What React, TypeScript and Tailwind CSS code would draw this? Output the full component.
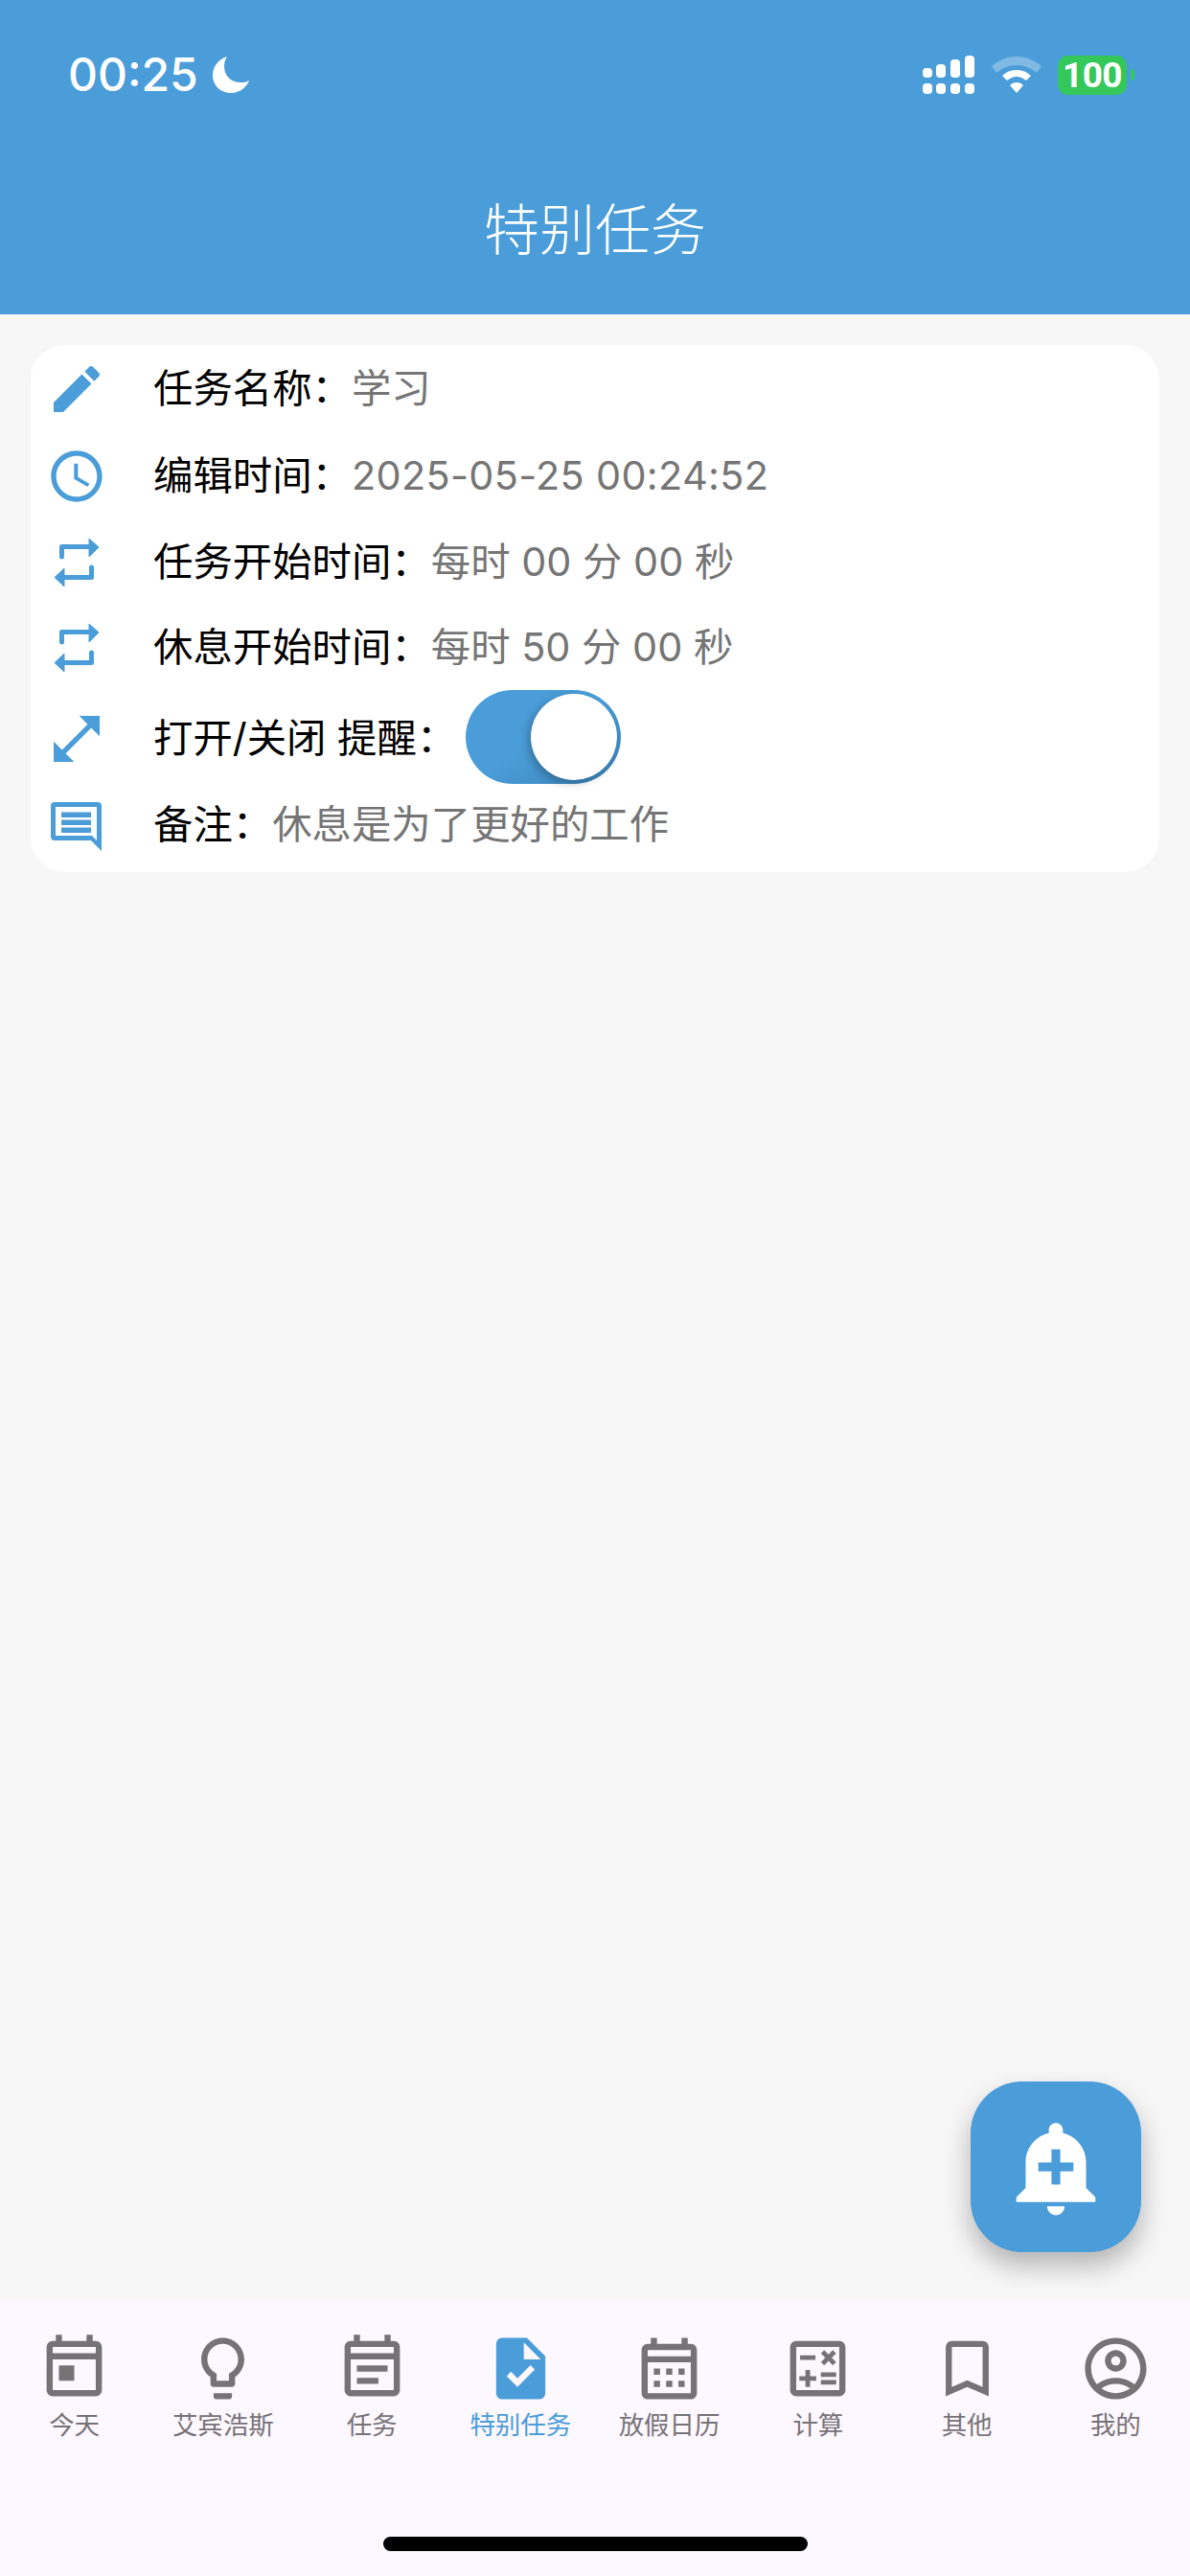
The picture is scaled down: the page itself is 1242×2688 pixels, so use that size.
import React from 'react';

const FONT = "font-['Inter','Noto_Sans_CJK_SC',sans-serif]";

const rows = [
  { h: 'h-[92px]', label: '任务名称：', value: '学习', icon: 'edit' },
  { h: 'h-[90px]', label: '编辑时间：', value: '2025-05-25 00:24:52', icon: 'clock' },
  { h: 'h-[90px]', label: '任务开始时间：', value: '每时 00 分 00 秒', icon: 'repeat' },
  { h: 'h-[88px]', label: '休息开始时间：', value: '每时 50 分 00 秒', icon: 'repeat' },
  { h: 'h-[102px]', label: '打开/关闭 提醒：', value: '', icon: 'expand' },
  { h: 'h-[78px]', label: '备注：', value: '休息是为了更好的工作', icon: 'note' },
];

const cardIcons: Record<string, string> = {
  edit: 'M3 17.25V21h3.75L17.81 9.94l-3.75-3.75L3 17.25zM20.71 7.04c.39-.39.39-1.02 0-1.41l-2.34-2.34c-.39-.39-1.02-.39-1.41 0l-1.83 1.83 3.75 3.75 1.83-1.83z',
  clock: 'M11.99 2C6.47 2 2 6.48 2 12s4.47 10 9.99 10C17.52 22 22 17.52 22 12S17.52 2 11.99 2zM12 20c-4.42 0-8-3.58-8-8s3.58-8 8-8 8 3.58 8 8-3.58 8-8 8zm.5-13H11v6l5.25 3.15.75-1.23-4.5-2.67z',
  expand: 'M21 11V3h-8l3.29 3.29-10 10L3 13v8h8l-3.29-3.29 10-10z',
};

const tabs = [
  { label: '今天', d: 'M19 3h-1V1h-2v2H8V1H6v2H5c-1.11 0-1.99.9-1.99 2L3 19c0 1.1.89 2 2 2h14c1.1 0 2-.9 2-2V5c0-1.1-.9-2-2-2zm0 16H5V9h14v10zm0-12H5V5h14v2zM7 11h5v5H7z' },
  { label: '艾宾浩斯', d: 'M9 21c0 .55.45 1 1 1h4c.55 0 1-.45 1-1v-1H9v1zm3-19C8.14 2 5 5.14 5 9c0 2.38 1.19 4.47 3 5.74V17c0 .55.45 1 1 1h6c.55 0 1-.45 1-1v-2.26c1.81-1.27 3-3.36 3-5.74 0-3.86-3.14-7-7-7zm2.85 11.1l-.85.6V16h-4v-2.3l-.85-.6C7.8 12.16 7 10.63 7 9c0-2.76 2.24-5 5-5s5 2.24 5 5c0 1.63-.8 3.16-2.15 4.1z' },
  { label: '任务', d: 'M19 3h-1V1h-2v2H8V1H6v2H5c-1.11 0-1.99.9-1.99 2L3 19c0 1.1.89 2 2 2h14c1.1 0 2-.9 2-2V5c0-1.1-.9-2-2-2zm0 16H5V9h14v10zm0-12H5V5h14v2zM7 11h10v2H7zm0 4h7v2H7z' },
  { label: '特别任务', active: true, d: 'M14 2H6c-1.1 0-1.99.9-1.99 2L4 20c0 1.1.89 2 2 2h12c1.1 0 2-.9 2-2V8l-6-6zm-3.06 16L7.4 14.46l1.41-1.41 2.12 2.12 4.24-4.24 1.41 1.41L10.94 18zM13 9V3.5L18.5 9H13z' },
  { label: '放假日历', d: 'M19 4h-1V2h-2v2H8V2H6v2H5c-1.1 0-2 .9-2 2v14c0 1.1.9 2 2 2h14c1.1 0 2-.9 2-2V6c0-1.1-.9-2-2-2zm0 16H5V10h14v10zm0-12H5V6h14v2zM7 12h2v2H7zm4 0h2v2h-2zm4 0h2v2h-2zM7 16h2v2H7zm4 0h2v2h-2zm4 0h2v2h-2z' },
  { label: '计算', d: 'M19 3H5c-1.1 0-2 .9-2 2v14c0 1.1.9 2 2 2h14c1.1 0 2-.9 2-2V5c0-1.1-.9-2-2-2zm0 16H5V5h14v14zM6.25 7.72h5v1.5h-5zM13 15.75h5v1.5h-5zM13 13.25h5v1.5h-5zM8 18h1.5v-2h2v-1.5h-2v-2H8v2H6V16h2zM14.09 10.95l1.41-1.41 1.41 1.41 1.06-1.06-1.41-1.42 1.41-1.41L16.91 6 15.5 7.41 14.09 6l-1.06 1.06 1.41 1.41-1.41 1.42z' },
  { label: '其他', d: 'M17 3H7c-1.1 0-1.99.9-1.99 2L5 21l7-3 7 3V5c0-1.1-.9-2-2-2zm0 15l-5-2.18L7 18V5h10v13z' },
  { label: '我的', d: 'M12 2C6.48 2 2 6.48 2 12s4.48 10 10 10 10-4.48 10-10S17.52 2 12 2zM7.35 18.5C8.66 17.56 10.26 17 12 17s3.34.56 4.65 1.5c-1.31.94-2.91 1.5-4.65 1.5s-3.34-.56-4.65-1.5zm10.79-1.38C16.45 15.8 14.32 15 12 15s-4.45.8-6.14 2.12C4.7 15.73 4 13.95 4 12c0-4.42 3.58-8 8-8s8 3.58 8 8c0 1.95-.7 3.73-1.86 5.12zM12 6c-1.93 0-3.5 1.57-3.5 3.5S10.07 13 12 13s3.5-1.57 3.5-3.5S13.93 6 12 6zm0 5c-.83 0-1.5-.67-1.5-1.5S11.17 8 12 8s1.5.67 1.5 1.5S12.83 11 12 11z' },
];

const RowIcon = ({ name }: { name: string }) => {
  if (name === 'repeat') {
    return (
      <svg viewBox="0 0 64 64" className="w-[64px] h-[64px]" fill="#4a9dd9">
        <path d="M16.5 26V15.500H48M47.500 37V47.500H18" fill="none" stroke="#4a9dd9" strokeWidth="5" strokeLinecap="round" strokeLinejoin="round" />
        <path d="M45 7l10 9-10 10zM19 38L9 47.500 19 57z" stroke="#4a9dd9" strokeWidth="1" strokeLinejoin="round" />
      </svg>
    );
  }
  if (name === 'note') {
    return (
      <svg viewBox="0 0 64 64" className="w-[64px] h-[64px]" fill="#4a9dd9">
        <path
          fillRule="evenodd"
          d="M9 8h45a4 4 0 0 1 4 4v47L47 48H9a4 4 0 0 1-4-4V12a4 4 0 0 1 4-4zm1 5v30h38l5 5V13H10z"
        />
        <path d="M16 18.500h31v5.500H16zM16 26.500h31V32H16zM16 34.500h31V40H16z" />
      </svg>
    );
  }
  return (
    <svg viewBox="0 0 24 24" className="w-[64px] h-[64px]" fill="#4a9dd9">
      <path d={cardIcons[name]} />
    </svg>
  );
};

const StatusBar = () => (
  <div className="flex items-center h-[92px] pt-[32px] pl-[71px] pr-[58px] box-content">
    <span className="text-[48px] leading-none font-medium text-white font-['Inter',sans-serif]">00:25</span>
    <svg viewBox="0 0 38 38" className="w-[38px] h-[38px] ml-[15px]" fill="#fff">
      <path d="M15 0C6 3 0 10 0 20c0 10 8 18 19 18 8 0 16-5 19-13-3 2-6 2-9 2C19 27 12 20 12 10c0-4 1-7 3-10z" />
    </svg>
    <div className="flex-1" />
    <svg viewBox="0 0 54 40" className="w-[54px] h-[40px]" fill="#fff">
      <rect x="0" y="13" width="10" height="10" rx="4" />
      <rect x="14" y="9" width="10" height="14" rx="4" />
      <rect x="29" y="4" width="10" height="19" rx="4" />
      <rect x="44" y="0" width="10" height="23" rx="4" />
      <rect x="0" y="29" width="10" height="11" rx="4" />
      <rect x="14" y="29" width="10" height="11" rx="4" />
      <rect x="29" y="29" width="10" height="11" rx="4" />
      <rect x="44" y="29" width="10" height="11" rx="4" />
    </svg>
    <svg viewBox="0 0 52 38" className="w-[52px] h-[38px] ml-[18px]" fill="#fff">
      <path opacity="0.3" d="M26 0c10 0 19 4 26 10l-5 7C41 12 34 9 26 9S11 12 5 17L0 10C7 4 16 0 26 0z" />
      <path d="M26 14c6 0 11 2 15 6l-5 5c-3-2-6-4-10-4s-7 2-10 4l-5-5c4-4 9-6 15-6z" />
      <path d="M26 27c3 0 5 1 7 3l-7 8-7-8c2-2 4-3 7-3z" />
    </svg>
    <div className="ml-[17px] w-[72px] h-[41px] rounded-[11px] bg-[#34c759] flex items-center justify-center text-[37px] leading-none font-bold text-white tracking-[-0.5px] font-['Roboto',sans-serif]">100</div>
    <div className="ml-[4px] w-[4px] h-[12px] rounded-r-full bg-[#34c759]" />
  </div>
);

const App = () => {
  return (
    <div className={`w-[1242px] h-[2688px] flex flex-col bg-[#f7f7f7] ${FONT}`}>
      {/* Header */}
      <header className="h-[328px] bg-[#4a9dd9] flex flex-col">
        <StatusBar />
        <h1 className="mt-[76px] text-center text-[58px] leading-[80px] font-light text-white">特别任务</h1>
      </header>

      {/* Detail card */}
      <main className="relative flex-1 px-[32px] pt-[32px]">
        <div className="bg-white rounded-[36px] pb-[10px]">
          {rows.map((row, i) => (
            <div key={i} className={`${row.h} flex items-center`}>
              <div className="w-[96px] flex justify-center">
                <RowIcon name={row.icon} />
              </div>
              <span className="ml-[32px] text-[41.4px] leading-none text-black whitespace-pre">{row.label}</span>
              {row.value && (
                <span className={`text-[41.4px] leading-none text-[#757575] whitespace-pre ${i === 1 ? 'tracking-[0.3px]' : ''}`}>{row.value}</span>
              )}
              {i === 4 && (
                <div className="ml-[10px] -mt-[4px] w-[162px] h-[98px] rounded-full bg-gradient-to-br from-[#4a9dd9] via-[#4a9dd9] to-[#3a82b8] flex items-center justify-end pr-[4px]">
                  <div className="w-[90px] h-[90px] rounded-full bg-white shadow-[-3px_3px_10px_rgba(0,0,0,0.25)]" />
                </div>
              )}
            </div>
          ))}
        </div>

        {/* FAB */}
        <button className="absolute right-[51px] bottom-[51px] w-[178px] h-[178px] rounded-[54px] bg-[#4a9dd9] flex items-center justify-center shadow-[0_14px_28px_rgba(0,0,0,0.28)]">
          <svg viewBox="0 0 24 24" className="w-[110px] h-[110px]" fill="#fff">
            <path d="M10.01 21.01c0 1.1.89 1.99 1.99 1.99s1.99-.89 1.99-1.99h-3.98zm8.87-4.19V11c0-3.25-2.25-5.97-5.28-6.69v-.72C13.6 2.71 12.89 2 12 2s-1.6.71-1.6 1.59v.72C7.37 5.03 5.12 7.75 5.12 11v5.82L3 18.94V20h18v-1.06l-2.12-2.12zM16 13.01h-3v3h-2v-3H8V11h3V8h2v3h3v2.010z" />
          </svg>
        </button>
      </main>

      {/* Bottom tabs */}
      <nav className="h-[287px] bg-[#fdf7ff] flex flex-col">
        <div className="grid grid-cols-8 pt-[32px]">
          {tabs.map((tab) => (
            <div key={tab.label} className="flex flex-col items-center">
              <svg viewBox="0 0 24 24" className="w-[77px] h-[77px]" fill={tab.active ? '#4a9dd9' : '#767377'}>
                <path d={tab.d} />
              </svg>
              <span className={`mt-[2px] text-[26.5px] leading-[36px] whitespace-nowrap ${tab.active ? 'text-[#4a9dd9]' : 'text-[#767377]'}`}>{tab.label}</span>
            </div>
          ))}
        </div>
        <div className="mt-auto mb-[26px] mx-auto w-[443px] h-[15px] rounded-full bg-black" />
      </nav>
    </div>
  );
};

export default App;
